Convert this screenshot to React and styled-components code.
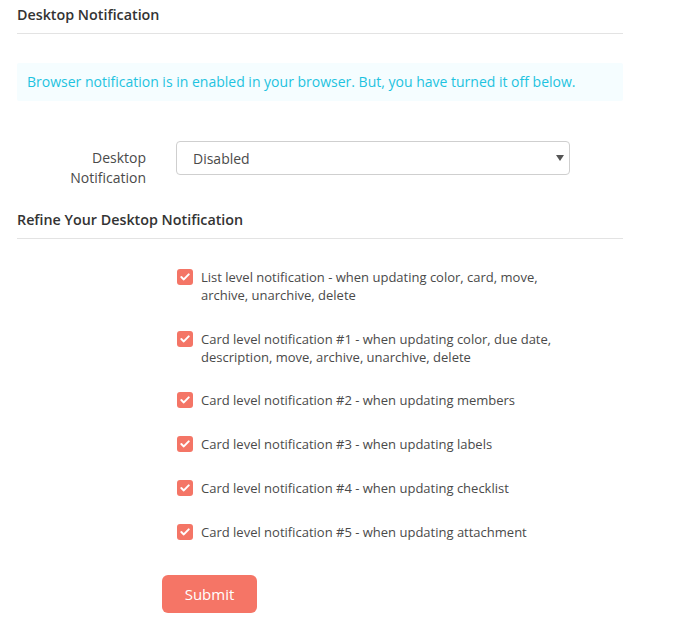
import React from 'react';
import styled, { createGlobalStyle } from 'styled-components';

const GlobalStyle = createGlobalStyle`
  body {
    margin: 0;
    background: #fff;
    font-family: "Open Sans", "Liberation Sans", sans-serif;
    color: #4a4a4a;
  }
`

const Container = styled.div`
  width: 606px;
  padding: 0 0 20px 17px;
`

const Heading = styled.h4`
  margin: 0;
  padding: ${({top}) => top || '5px'} 0 8px;
  font-size: 14.3px;
  line-height: 20px;
  font-weight: 600;
  color: #333;
  border-bottom: 1px solid #e3e3e3;
`

const Alert = styled.div`
  margin-top: 29px;
  background: #f5fdff;
  color: #1ec3e0;
  font-size: 14px;
  line-height: 18px;
  padding: 10px 10px;
  border-radius: 2px;
`

const FormRow = styled.div`
  display: flex;
  align-items: flex-start;
  margin-top: 40px;
`

const Label = styled.label`
  width: 129px;
  margin-right: 30px;
  text-align: right;
  font-size: 14px;
  line-height: 20px;
  padding-top: 7px;
  color: #4a4a4a;
`

const SelectWrap = styled.div`
  position: relative;
  width: 394px;
`

const Select = styled.select`
  appearance: none;
  width: 100%;
  height: 34px;
  padding: 0 16px;
  font-family: inherit;
  font-size: 14px;
  color: #4a4a4a;
  background: #fff;
  border: 1px solid #cfcfcf;
  border-radius: 4px;
`

const Arrow = styled.svg`
  position: absolute;
  right: 6px;
  top: 14px;
  pointer-events: none;
`

const List = styled.div`
  display: flex;
  flex-direction: column;
  gap: 25.5px;
  padding-left: 160px;
  margin-top: 29px;
`

const Row = styled.label`
  display: flex;
  align-items: flex-start;
  gap: 8px;
  min-height: 18.5px;
  font-size: 13px;
  line-height: 18px;
  color: #4a4a4a;
  width: 390px;
`

const Box = styled.span`
  flex: none;
  width: 16px;
  height: 16px;
  margin-top: 1px;
  border-radius: 3px;
  background: #f47566;
  display: flex;
  align-items: center;
  justify-content: center;
`

const Submit = styled.button`
  margin: 33px 0 0 145px;
  width: 95px;
  height: 38px;
  border: none;
  border-radius: 6px;
  background: #f57566;
  color: #fff;
  font-family: inherit;
  font-size: 15px;
`

const items = [
  'List level notification - when updating color, card, move, archive, unarchive, delete',
  'Card level notification #1 - when updating color, due date, description, move, archive, unarchive, delete',
  'Card level notification #2 - when updating members',
  'Card level notification #3 - when updating labels',
  'Card level notification #4 - when updating checklist',
  'Card level notification #5 - when updating attachment',
]

const Check = () => (
  <Box>
    <svg width="10" height="8" viewBox="0 0 10 8">
      <path d="M1.3 4.1 L3.8 6.4 L8.7 1.4" fill="none" stroke="#fff" strokeWidth="2" strokeLinecap="round" strokeLinejoin="round" />
    </svg>
  </Box>
)

const App = () => {
  return (
    <Container>
      <GlobalStyle />
      <Heading>Desktop Notification</Heading>
      <Alert>Browser notification is in enabled in your browser. But, you have turned it off below.</Alert>
      <FormRow>
        <Label>Desktop Notification</Label>
        <SelectWrap>
          <Select defaultValue="disabled">
            <option value="disabled">Disabled</option>
            <option value="enabled">Enabled</option>
          </Select>
          <Arrow width="8" height="6" viewBox="0 0 8 6">
            <path d="M0 0 H8 L4 6 Z" fill="#555" />
          </Arrow>
        </SelectWrap>
      </FormRow>
      <Heading top="22px">Refine Your Desktop Notification</Heading>
      <List>
        {items.map((t) => (
          <Row key={t}>
            <Check />
            <span>{t}</span>
          </Row>
        ))}
      </List>
      <Submit>Submit</Submit>
    </Container>
  )
}

export default App;
